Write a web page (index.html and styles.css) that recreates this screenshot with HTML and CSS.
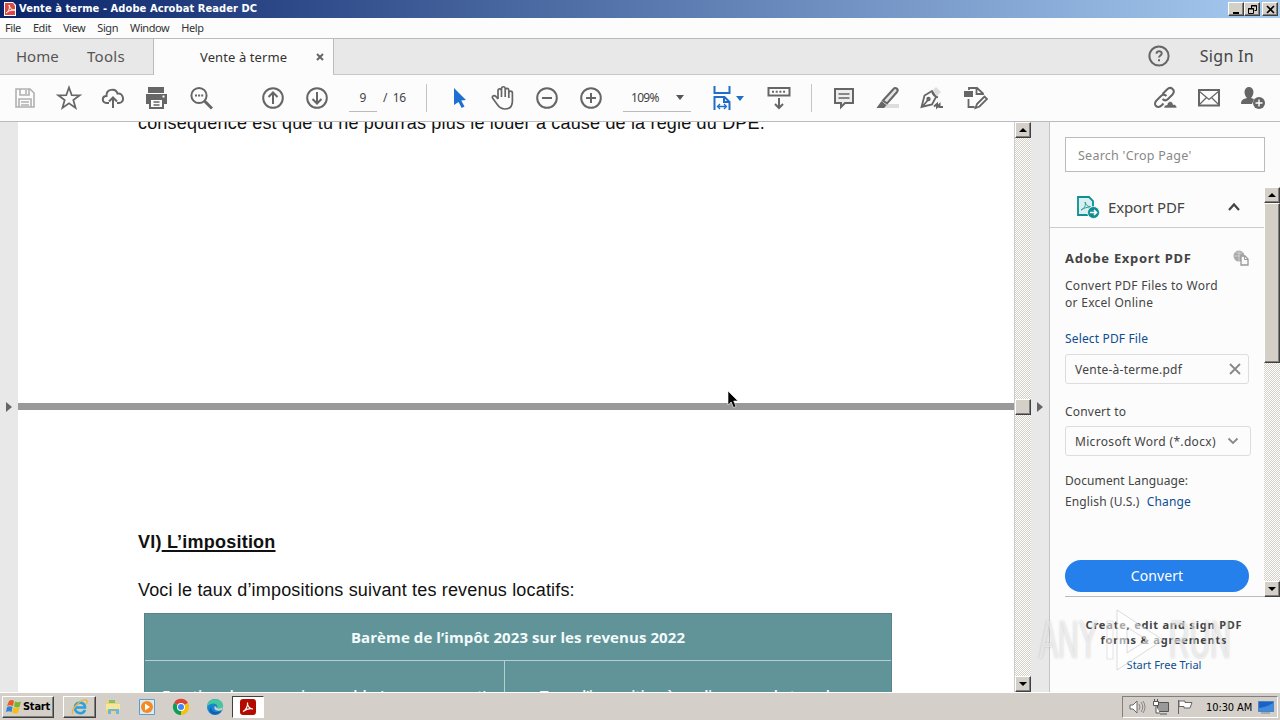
FILE: index.html
```html
<!DOCTYPE html>
<html lang="en">
<head>
    <meta charset="UTF-8">
    <title>Vente à terme - Adobe Acrobat Reader DC</title>
    <link rel="stylesheet" href="styles.css">
</head>
<body>
    <div class="titlebar">
        <svg class="app-icon" width="12" height="14" viewBox="0 0 12 14"><path d="M0 0h9l3 3v11H0z" fill="#fff"/><path d="M1 1h8l2 3v9H1z" fill="#dc4a43"/><path d="M2 11C5 9 6 6 5 3c2 5 3 5 6 5C7 8 4 9 2 11z" fill="none" stroke="#fff"/></svg>
        <span class="title">Vente à terme - Adobe Acrobat Reader DC</span>
        <div class="window-buttons">
            <div class="btn3d"><svg width="13" height="11"><path d="M3 8h6v2H3z"/></svg></div>
            <div class="btn3d"><svg width="13" height="11"><path d="M5.500 4V1.500h5v5H8.500M5 2h6M2.500 4.500h5v5h-5zM2 5h6" fill="none" stroke="#000"/></svg></div>
            <div class="btn3d close"><svg width="13" height="11"><path d="M3 2l7 7M10 2L3 9" stroke="#000" stroke-width="1.700"/></svg></div>
        </div>
    </div>

    <div class="menubar">
        <span>File</span><span>Edit</span><span>View</span><span>Sign</span><span>Window</span><span>Help</span>
    </div>

    <div class="tabs">
        <div class="tab-left"><span class="tab-home">Home</span><span class="tab-tools">Tools</span></div>
        <div class="tab-active"><span>Vente à terme</span><svg width="8" height="8"><path d="M1 1l6 6M7 1L1 7" stroke="#666" stroke-width="2"/></svg></div>
        <div class="tab-right">
            <svg class="icon" width="22" height="22" viewBox="0 0 22 22"><circle cx="11" cy="11" r="9.600"/><path d="M8.500 8.800c0-3.700 5.300-3.200 5.200-.3 0 1.900-2.700 2-2.700 4M11 14.200v2"/></svg>
            <span>Sign In</span>
        </div>
    </div>

    <div class="toolbar">
        <div class="tool"><svg class="icon light" width="22" height="22" viewBox="0 0 22 22"><path d="M2 2h14l4 4v14H2zM6 2v6h9V2M12 3v4M5 20v-8h12v8M7 15h8M7 18h8"/></svg></div>
        <div class="tool"><svg class="icon star" width="26" height="26" viewBox="0 0 26 26"><path d="M13 2.500l2.700 7.600 8 .2-6.400 4.800 2.300 7.800-6.600-4.600-6.600 4.600 2.300-7.800-6.400-4.800 8-.2z"/></svg></div>
        <div class="tool"><svg class="icon" width="24" height="24" viewBox="0 0 24 24"><path d="M8 17H5.500C.5 17 .7 10 5.500 10 5 3 14.500 1.500 16.500 7.500c6-1 8 9 1.500 9.500h-2M12 22v-10M8 15.500l4-4 4 4"/></svg></div>
        <div class="tool"><svg class="icon" width="24" height="24" viewBox="0 0 24 24"><path d="M4 2h14v4H4z" fill="#666"/><path d="M1 8h21v10h-3v-4H4v4H1z" fill="#666" stroke="none"/><path d="M5 13h13v9H5z" fill="#fcfcfc"/><path d="M8.500 16h6M8.500 19h6" stroke-width="1.400"/><path d="M17.500 10.500h2" stroke="#fff"/><path d="M4 7.500h14" stroke="#fff" stroke-width="1"/></svg></div>
        <div class="tool"><svg class="icon" width="24" height="24" viewBox="0 0 24 24"><circle cx="10" cy="9.500" r="7.600"/><path d="M15.500 15l7.500 7.500" stroke-width="3"/><path d="M6 9.500h2M9.100 9.500h2M12.200 9.500h2"/></svg></div>
        <div class="tool gap-before"><svg class="icon" width="24" height="24" viewBox="0 0 24 24"><circle cx="12" cy="12" r="9.800"/><path d="M12 18V6.500M7.500 11L12 6.500l4.500 4.500"/></svg></div>
        <div class="tool"><svg class="icon" width="24" height="24" viewBox="0 0 24 24"><circle cx="12" cy="12" r="9.800"/><path d="M12 6v11.500M7.500 13l4.500 4.500 4.500-4.500"/></svg></div>
        <div class="page-box"><span class="page-input">9</span><span class="page-total">/&nbsp; 16</span></div>
        <div class="sep"></div>
        <div class="tool"><svg class="arrow" width="14" height="22" viewBox="0 0 14 22"><path d="M1 1l12 12-4.800.5 3.300 6-2.800 1.500-3.200-6L1 18z" fill="#1f6fd0"/></svg></div>
        <div class="tool"><svg class="icon hand" width="26" height="26" viewBox="0 0 26 26"><path d="M8 14V6c0-2.800 3.500-2.800 3.500 0v6-8c0-3 3.700-3 3.700 0v8-6.500c0-2.800 3.600-2.800 3.600 0V13 8c0-2.600 3.600-2.600 3.600 0v8c0 5.500-3 8-7.500 8-4 0-6-2-8-5l-4-5.500c-1.700-2.200 1-3.800 3-2L8 14"/></svg></div>
        <div class="tool"><svg class="icon" width="24" height="24" viewBox="0 0 24 24"><circle cx="12" cy="12" r="9.800"/><path d="M7 12h10"/></svg></div>
        <div class="tool"><svg class="icon" width="24" height="24" viewBox="0 0 24 24"><circle cx="12" cy="12" r="9.800"/><path d="M7 12h10M12 7v10"/></svg></div>
        <div class="zoom-box"><span>109%</span><i class="caret"></i></div>
        <div class="tool fit"><svg class="icon blue" width="18" height="26" viewBox="0 0 18 26"><path d="M1.500 1v7h15V1M1.500 25V12h10l5 5v8M11 12v5h5M1.500 24h1M15.500 24h1"/><path d="M5 21.500h8M7 19l-2.500 2.500L7 24M11 19l2.500 2.500L11 24" stroke-width="1.300"/></svg><i class="caret blue"></i></div>
        <div class="tool"><svg class="icon" width="24" height="24" viewBox="0 0 24 24"><path d="M1.500 2h21v7.500h-21zM12 12v10M8 18l4 4 4-4"/><path d="M5 5.800h2M8.700 5.800h2M12.400 5.800h2M16.100 5.800h2"/></svg></div>
        <div class="sep right"></div>
        <div class="tool"><svg class="icon" width="22" height="24" viewBox="0 0 22 24"><path d="M2 3h18v14h-8l-4 4v-4H2z" fill="#eee"/><path d="M5.500 8h11M5.500 12h11" stroke-width="1.400"/></svg></div>
        <div class="tool"><svg class="icon" width="24" height="24" viewBox="0 0 24 24"><path d="M9 18h14v4H4z" fill="#ddd" stroke="none"/><path d="M7 14.500L17.500 3c2-2.500 5.500.5 3.500 3L11 17.500z" fill="#e4e4e4"/><path d="M5.500 15l5 4.200L8 22H.5z" fill="#666" stroke="none"/></svg></div>
        <div class="tool"><svg class="icon" width="24" height="24" viewBox="0 0 24 24"><path d="M13 4l3-3 5 5-4 4z" fill="#ddd" stroke="none"/><path d="M12 5L4.500 9.500 1.500 21l10.500-2.500L16 11zM2 21l6-7M12 5c.5 3 3 5.500 6 6.500" stroke-width="1.800"/><circle cx="8.500" cy="13" r="1.200"/><path d="M14 20.500l3-2.500v3l2.500-2.500v2.500H23"/></svg></div>
        <div class="tool"><svg class="icon" width="24" height="24" viewBox="0 0 24 24"><path d="M0 5h9v6H0z" fill="#666" stroke="none"/><path d="M5 4V2h8l6 5.500V9M12.500 2v6h6M4.500 13v8h6M13 18l7.500-7.500L23 13l-7.500 7.500-4 1.500z" stroke-width="1.800"/></svg></div>
        <div class="share-tools">
            <div class="tool"><svg class="icon" width="24" height="24" viewBox="0 0 24 24"><path d="M9.500 8l4.500-4.500c4-4 9 1 5.500 5L15 13c-2 2-4 1.500-5.500 0M13.500 10c-2-2-4-1.500-5.500 0l-4.500 4.500c-4 4 1 9 5 5l2-2"/><path d="M11 22c0-3 2-3 3-3 1-5 6-4 6-.5 3-.5 3 1 4 3.500z" fill="#666" stroke="#fcfcfc" stroke-width=".6"/></svg></div>
            <div class="tool"><svg class="icon" width="24" height="20" viewBox="0 0 24 20"><path d="M2 2h20v15.500H2z"/><path d="M2 3l10 8.500L22 3M2 17l7.500-7.500M22 17l-7.500-7.500" stroke-width="1.200"/></svg></div>
            <div class="tool"><svg class="icon" width="26" height="24" viewBox="0 0 26 24"><path d="M1 18c0-4 2-5 6-6-4-4-3-11 2-11s6 7 2 11l3 1-2 5z" fill="#666" stroke="none"/><circle cx="19" cy="17" r="6" fill="#666" stroke="none"/><path d="M15.500 17h7M19 13.500v7" stroke="#fff" stroke-width="1.400"/></svg></div>
        </div>
    </div>

    <div class="main">
        <div class="rail"><i class="rail-arrow"></i></div>
        <div class="document">
            <p class="cut-line">conséquence est que tu ne pourras plus le louer à cause de la règle du DPE.</p>
            <div class="page-gap"></div>
            <h1>VI)<u> L’imposition</u></h1>
            <p class="intro">Voci le taux d’impositions suivant tes revenus locatifs:</p>
            <div class="tax-table">
                <div class="tax-title">Barème de l’impôt 2023 sur les revenus 2022</div>
                <div class="tax-head"><div>Fraction du revenu imposable (pour une part)</div><div>Taux d’imposition à appliquer sur la tranche</div></div>
            </div>
        </div>
        <div class="scrollbar doc-scroll">
            <div class="btn3d"><i class="up"></i></div>
            <div class="btn3d thumb"></div>
            <div class="btn3d"><i class="down"></i></div>
        </div>
        <div class="rail"><i class="rail-arrow"></i></div>
        <div class="panel">
            <div class="search">Search 'Crop Page'</div>
            <div class="panel-body">
                <div class="panel-content">
                    <div class="export-head">
                        <svg width="24" height="24" viewBox="0 0 24 24"><path d="M2 2h11l4 4v14H2z" fill="#d8f0f0" stroke="#108e91" stroke-width="1.800"/><path d="M5 15c4-2 5-5 4-8 1 3 3 5 6 5-4 0-7 1-10 3z" fill="none" stroke="#2d9b9d"/><circle cx="17.500" cy="17.500" r="6" fill="#108e91" stroke="#fcfcfc" stroke-width=".8"/><path d="M14 17.500h6M18 15l2.500 2.500L18 20" fill="none" stroke="#fff" stroke-width="1.600"/></svg>
                        <span>Export PDF</span>
                        <svg class="chevron" width="14" height="10" viewBox="0 0 14 10"><path d="M2 8l5-5.500L12 8" fill="none" stroke="#444" stroke-width="2.200"/></svg>
                    </div>
                    <div class="export-form">
                        <div class="form-title"><span>Adobe Export PDF</span><svg width="18" height="18" viewBox="0 0 18 18"><circle cx="7" cy="7" r="5.500" fill="#aaa"/><path d="M1.500 7h11M7 1.500v11M3.500 3.500q3.500 2 7 0" fill="none" stroke="#ddd" stroke-width=".7"/><path d="M9 7h4l3 3v6H9z" fill="#fafafa" stroke="#999" stroke-width="1.300"/><path d="M12.500 7v3.500H16" fill="none" stroke="#999"/></svg></div>
                        <p class="desc">Convert PDF Files to Word<br>or Excel Online</p>
                        <p class="link select-file">Select PDF File</p>
                        <div class="field file-field"><span>Vente-à-terme.pdf</span><svg width="12" height="12"><path d="M1 1l10 10M11 1L1 11" stroke="#888" stroke-width="1.800"/></svg></div>
                        <p class="convert-to">Convert to</p>
                        <div class="field format-field"><span>Microsoft Word (*.docx)</span><svg width="12" height="8"><path d="M1.500 1.500L6 6l4.500-4.500" fill="none" stroke="#888" stroke-width="1.800"/></svg></div>
                        <p class="doc-lang">Document Language:</p>
                        <p class="lang">English (U.S.) <span class="link">Change</span></p>
                        <div class="convert-btn">Convert</div>
                    </div>
                </div>
                <div class="scrollbar panel-scroll">
                    <div class="btn3d"><i class="up"></i></div>
                    <div class="btn3d thumb"></div>
                    <div class="btn3d end"><i class="down"></i></div>
                </div>
            </div>
            <div class="promo">
                <b>Create, edit and sign PDF<br>forms &amp; agreements</b>
                <span class="link">Start Free Trial</span>
            </div>
        </div>
    </div>

    <div class="taskbar">
        <div class="start btn3d"><svg width="16" height="16" viewBox="0 0 16 16"><path d="M3 2q3-2 5 0L7 7Q4 5.500 1 7z" fill="#ea5b22"/><path d="M9 2.500q3 1.500 6 0L13.500 8Q11 9 8 7.500z" fill="#76b82a"/><path d="M1 8q3-1.500 5.500 0L5.500 13Q3 11.500 0 13z" fill="#2f82d6"/><path d="M7.500 8.500q3 1.500 6 0L12 14q-3 1-6-.5z" fill="#f9bd19"/></svg><span>Start</span></div>
        <div class="task btn3d ie"><svg width="18" height="18" viewBox="0 0 18 18"><path d="M14 12c-2 5-10 4-10-2.500S14 3 14 9.500H5" fill="none" stroke="#2da0dc" stroke-width="2.600"/><path d="M2 16C-1 13 9 1 15 2c2 .5 1 3 0 4" fill="none" stroke="#e6b83a" stroke-width="1.400"/></svg></div>
        <div class="task"><svg width="18" height="18" viewBox="0 0 18 18"><path d="M2 3h5l1 2h7v10H2z" fill="#f2d36b"/><path d="M5 2h6v3H5z" fill="#7cc474"/><path d="M2 6h14v6H2z" fill="#f8e59a"/><path d="M4 16v-5h11v5h-3v-3H7v3z" fill="#6bb7e0"/></svg></div>
        <div class="task"><svg width="18" height="18" viewBox="0 0 18 18"><path d="M1.500 1.500h15v15h-15z" fill="#d9ebf7" stroke="#5b9dcb"/><circle cx="9" cy="9" r="6" fill="#f58a1f"/><path d="M7 5.500l5 3.500-5 3.500z" fill="#fff"/></svg></div>
        <div class="task"><svg width="18" height="18" viewBox="0 0 18 18"><path d="M9 9L2 5a8 8 0 0 1 14 0z" fill="#db4437"/><path d="M9 9L2 5a8 8 0 0 0 7 12z" fill="#0f9d58"/><path d="M9 9l7-4a8 8 0 0 1-7 12z" fill="#f4c20d"/><circle cx="9" cy="9" r="4" fill="#fff"/><circle cx="9" cy="9" r="3" fill="#4285f4"/></svg></div>
        <div class="task"><svg width="18" height="18" viewBox="0 0 18 18"><circle cx="9" cy="9" r="8" fill="#1686d0"/><path d="M1 9C1-1 17-1 17 8c0 4-5 4-6 2 2-4-5-7-10-1z" fill="#45c8a0"/><path d="M5 9c0 5 5 6 10 4-2 4-8 5-11 1-1-2 0-4 1-5z" fill="#1261ad"/><path d="M9 8c-2 3 1 6 7 4l1-3c-2 2-5 2-6 1z" fill="#d4d0c8"/></svg></div>
        <div class="task pressed"><svg width="16" height="16" viewBox="0 0 16 16"><rect width="16" height="16" rx="3" fill="#b30b00"/><path d="M3 12.500C6 11 8 7 7.500 3.500 7 7 10 10 13 10c-4-1-8 1-10 2.500z" fill="none" stroke="#fff" stroke-width="1.200"/></svg></div>
        <div class="tray">
            <svg width="18" height="18" viewBox="0 0 18 18"><path d="M2 7h3l4-4v12l-4-4H2z" fill="#fff" stroke="#666"/><path d="M11 6q2 3 0 6M13 4q3.500 5 0 10M15 3q4 6 0 12" fill="none" stroke="#888"/></svg>
            <svg width="18" height="18" viewBox="0 0 18 18"><path d="M5.500 4.500h11v9h-11zM8 16h7" fill="#999" stroke="#555"/><path d="M1.500 3.500h5v4h-5zM2.500 1v2M5.500 1v2M4 8v7h4" fill="#fff" stroke="#555"/></svg>
            <svg width="18" height="18" viewBox="0 0 18 18"><path d="M2.500 2v14M3 3h6v1.500h7L14 10H8V8.500H3z" fill="#fff" stroke="#666"/></svg>
            <span>10:30 AM</span>
            <svg width="16" height="14" viewBox="0 0 16 14"><path d="M.5 1.500h15v10H.5z" fill="#1c62c4" stroke="#4f83bd"/><path d="M1 8q6 0 14-5v8H1z" fill="#3f8be0"/><path d="M3 13h9" stroke="#789"/></svg>
        </div>
    </div>

    <svg class="mouse" width="12" height="19" viewBox="0 0 12 19"><path d="M1 1v14l3.200-3 2.300 5.500 2.500-1L6.700 11H11z" fill="#000" stroke="#fff" stroke-width=".6"/></svg>

    <div class="watermark"><span class="any">ANY</span><svg width="64" height="66" viewBox="0 0 64 66"><path d="M12 3l46 30-46 30zM22 20v26l20-13z" fill="#fff" fill-opacity=".55" fill-rule="evenodd" stroke="#bbb" stroke-opacity=".5"/><path d="M2 14h6v38H2z" fill="#fff" fill-opacity=".5" stroke="#ccc" stroke-opacity=".5"/></svg><span class="run">RUN</span></div>
</body>
</html>
```
FILE: styles.css
```css
* {
    box-sizing: border-box;
}
body {
    margin: 0;
    width: 1280px;
    height: 720px;
    overflow: hidden;
    position: relative;
    display: flex;
    flex-direction: column;
    background: #fff;
    color: #444;
    font-family: "Noto Sans", sans-serif;
}
p, h1 {
    margin: 0;
    white-space: nowrap;
}
svg {
    display: block;
    flex: none;
}
span {
    white-space: nowrap;
}
.icon {
    fill: none;
    stroke: #666;
    stroke-width: 2;
}
.icon.light {
    stroke: #b0b0b0;
    stroke-width: 1.6;
}
.icon.hand, .icon.star {
    stroke-width: 1.7;
}
.icon.blue {
    stroke: #1f6fc8;
}
.btn3d {
    display: flex;
    align-items: center;
    justify-content: center;
    background: #d4d0c8;
    border: 1px solid;
    border-color: #fff #404040 #404040 #fff;
    box-shadow: inset -1px -1px 0 #808080;
}

/* title bar and menu */
.titlebar {
    height: 18px;
    flex: none;
    display: flex;
    align-items: center;
    padding: 0 2px 0 4px;
    background: linear-gradient(to right, #0a246a, #a6caf0);
}
.title {
    margin-left: 3px;
    color: #fff;
    font: bold 11px/16px "DejaVu Sans Condensed", "DejaVu Sans", sans-serif;
    letter-spacing: 0.09px;
}
.window-buttons {
    margin-left: auto;
    display: flex;
}
.window-buttons .btn3d {
    width: 16px;
    height: 14px;
}
.window-buttons .close {
    margin-left: 2px;
}
.menubar {
    height: 20px;
    flex: none;
    display: flex;
    gap: 12px;
    padding-left: 5px;
    background: #fcfcfc;
    color: #333;
    font-size: 11px;
    line-height: 20px;
    letter-spacing: -0.42px;
}

/* tabs */
.tabs {
    height: 37px;
    flex: none;
    display: flex;
    border-top: 1px solid #bbb;
    background: #e8e8e8;
}
.tab-left {
    width: 154px;
    display: flex;
    border-right: 1px solid #bbb;
    border-bottom: 1px solid #c8c8c8;
    font-size: 15px;
    line-height: 35px;
    color: #555;
}
.tab-home {
    margin-left: 16px;
    width: 71px;
}
.tab-tools {
    letter-spacing: 0.3px;
}
.tab-active {
    width: 179px;
    display: flex;
    align-items: center;
    justify-content: space-between;
    padding: 0 9px 0 46px;
    background: #fcfcfc;
    color: #333;
    font-size: 13px;
    letter-spacing: 0.1px;
}
.tab-right {
    flex: 1;
    display: flex;
    align-items: center;
    justify-content: flex-end;
    padding-right: 26px;
    border-left: 1px solid #bbb;
    border-bottom: 1px solid #c8c8c8;
    font-size: 16px;
    line-height: 34px;
}
.tab-right svg {
    margin-bottom: 2px;
}
.tab-right span {
    margin: 0 0 2px 30px;
    letter-spacing: 0.3px;
}

/* toolbar */
.toolbar {
    height: 47px;
    flex: none;
    display: flex;
    align-items: center;
    padding: 0 5px 0 3px;
    background: #fcfcfc;
    border-bottom: 1px solid #bbb;
    font-size: 12px;
}
.tool {
    width: 44px;
    height: 40px;
    flex: none;
    display: flex;
    align-items: center;
    justify-content: center;
}
.gap-before {
    margin-left: 28px;
}
.page-box {
    width: 87px;
    display: flex;
    padding-left: 10px;
}
.page-input {
    width: 28px;
    height: 28px;
    text-align: center;
    line-height: 27px;
    border-bottom: 1px solid #bbb;
}
.page-total {
    margin-left: 6px;
    line-height: 27px;
    letter-spacing: -0.3px;
}
.sep {
    width: 1px;
    height: 28px;
    margin-right: 10px;
    background: #c4c4c4;
}
.sep.right {
    margin-left: 10px;
}
.arrow {
    margin-left: 1px;
}
.zoom-box {
    width: 68px;
    height: 28px;
    margin: 0 15px 0 10px;
    padding: 0 7px 0 8px;
    display: flex;
    align-items: center;
    justify-content: space-between;
    border-bottom: 1px solid #bbb;
    letter-spacing: -0.7px;
}
.caret {
    border: 4px solid transparent;
    border-top: 5px solid #555;
    border-bottom: 0;
}
.caret.blue {
    border-top-color: #1f6fc8;
}
.fit {
    gap: 5px;
    margin-right: 7px;
}
.share-tools {
    display: flex;
    margin-left: auto;
}

/* document area */
.main {
    height: 570px;
    flex: none;
    display: flex;
}
.rail {
    width: 18px;
    flex: none;
    display: flex;
    align-items: center;
    justify-content: center;
    background: #e8e8e8;
}
.rail-arrow {
    border: 5px solid transparent;
    border-left: 6px solid #666;
    border-right: 0;
}
.document {
    width: 996px;
    flex: none;
    overflow: hidden;
    color: #111;
    font-family: "Liberation Sans", Arial, sans-serif;
    font-size: 18px;
}
.cut-line {
    height: 20px;
    margin: -9px 0 0 120px;
    line-height: 20px;
    letter-spacing: 0.18px;
}
.page-gap {
    height: 7px;
    margin-top: 270px;
    background: #999;
}
.document h1 {
    margin: 120px 0 0 120px;
    font-size: 18px;
    line-height: 24px;
    letter-spacing: 0.22px;
}
.document h1 u {
    text-underline-offset: 2px;
    text-decoration-thickness: 2px;
    text-decoration-skip-ink: none;
}
.intro {
    margin: 24px 0 0 120px;
    line-height: 24px;
    letter-spacing: 0.17px;
}
.tax-table {
    width: 748px;
    margin: 11px 0 0 126px;
    background: #609499;
    border: 1px solid #568489;
    color: #f4fbfb;
}
.tax-title {
    height: 47px;
    text-align: center;
    font: bold 15px/47px "Open Sans", sans-serif;
    letter-spacing: 0.09px;
    border-bottom: 1px solid #b5d0d2;
}
.tax-head {
    display: flex;
    font: 600 15px/24px "Open Sans", sans-serif;
    white-space: nowrap;
}
.tax-head div {
    flex: 1;
    height: 60px;
    padding: 22px 0 0 35px;
    letter-spacing: -0.35px;
}
.tax-head div:first-child {
    flex: none;
    width: 360px;
    padding-left: 17px;
    letter-spacing: -0.1px;
    border-right: 1px solid #b5d0d2;
}

/* scrollbars */
.scrollbar {
    flex: none;
    display: flex;
    flex-direction: column;
    background: repeating-conic-gradient(#fff 0 25%, #d4d0c8 0 50%) 0 0 / 2px 2px;
}
.scrollbar .btn3d {
    height: 16px;
    flex: none;
}
.doc-scroll {
    width: 17px;
    border-left: 1px solid #ccc;
}
.doc-scroll .thumb {
    margin: 261px 0;
}
.up {
    border: 4px solid transparent;
    border-bottom-color: #000;
    border-top: 0;
}
.down {
    border: 4px solid transparent;
    border-top-color: #000;
    border-bottom: 0;
}

/* tools panel */
.panel {
    width: 231px;
    flex: none;
    border-left: 1px solid #c4c4c4;
    background: #fcfcfc;
}
.search {
    width: 200px;
    height: 35px;
    margin: 15px 0 15px 15px;
    padding-left: 12px;
    border: 1px solid #bbb;
    background: #fff;
    color: #888;
    font-size: 12.5px;
    line-height: 35px;
    letter-spacing: 0.25px;
}
.panel-body {
    height: 410px;
    display: flex;
}
.panel-content {
    width: 214px;
}
.panel-scroll {
    width: 16px;
}
.panel-scroll .thumb {
    height: 160px;
}
.panel-scroll .end {
    margin-top: auto;
}
.export-head {
    height: 41px;
    display: flex;
    align-items: center;
    padding-left: 26px;
    border-bottom: 1px solid #ccc;
    font-size: 15px;
    letter-spacing: -0.15px;
}
.export-head span {
    margin-left: 8px;
    width: 119px;
}
.export-form {
    height: 369px;
    margin-left: 15px;
    padding-top: 20px;
    border-bottom: 1px solid #bbb;
    font-size: 12px;
    line-height: 17px;
}
.form-title {
    display: flex;
    align-items: center;
    justify-content: space-between;
    width: 185px;
    height: 20px;
    font-size: 13px;
    font-weight: bold;
    letter-spacing: 0.7px;
}
.desc {
    margin-top: 9px;
    letter-spacing: 0.28px;
}
.link {
    color: #0d4e91;
}
.select-file {
    margin-top: 19px;
    letter-spacing: 0.15px;
}
.field {
    display: flex;
    align-items: center;
    justify-content: space-between;
    width: 184px;
    height: 30px;
    padding: 0 7px 0 9px;
    border: 1px solid #ddd;
    border-radius: 3px;
    letter-spacing: 0.25px;
}
.file-field {
    margin-top: 7px;
}
.convert-to {
    margin-top: 19px;
    letter-spacing: 0.2px;
}
.format-field {
    width: 186px;
    margin-top: 6px;
    padding-right: 11px;
    letter-spacing: 0.32px;
}
.doc-lang {
    margin-top: 16px;
    letter-spacing: 0.1px;
}
.lang {
    margin-top: 4px;
    letter-spacing: 0.13px;
}
.lang .link {
    margin-left: 4px;
}
.convert-btn {
    width: 184px;
    height: 32px;
    margin-top: 50px;
    border-radius: 16px;
    background: #2680eb;
    color: #fff;
    font-size: 14px;
    line-height: 31px;
    letter-spacing: 0.1px;
    text-align: center;
}
.promo {
    display: flex;
    flex-direction: column;
    align-items: center;
    padding: 20px 2px 0 0;
    text-align: center;
    font-size: 11px;
    line-height: 15px;
}
.promo b {
    letter-spacing: 0.8px;
}
.promo .link {
    margin-top: 10px;
}

/* taskbar */
.taskbar {
    height: 28px;
    flex: none;
    display: flex;
    align-items: center;
    padding: 1px 2px 0;
    border-top: 1px solid #fff;
    background: #d4cfc8;
}
.start {
    width: 52px;
    height: 22px;
    gap: 1px;
    margin-right: 9px;
    color: #000;
    font: bold 11px/20px "DejaVu Sans Condensed", sans-serif;
    letter-spacing: -0.2px;
}
.task {
    width: 34px;
    height: 22px;
    display: flex;
    align-items: center;
    justify-content: center;
}
.task.ie {
    width: 33px;
}
.pressed {
    width: 32px;
    background: #fff;
    border: 1px solid;
    border-color: #404040 #fff #fff #404040;
}
.tray {
    display: flex;
    align-items: center;
    gap: 6px;
    width: 156px;
    height: 22px;
    margin-left: auto;
    padding-left: 5px;
    border: 1px solid;
    border-color: #808080 #fff #fff #808080;
    color: #000;
    font: 11px "DejaVu Sans Condensed", sans-serif;
    letter-spacing: -0.1px;
}
.tray span {
    margin-left: 6px;
}

.mouse {
    position: absolute;
    left: 727px;
    top: 390px;
}
.watermark {
    position: absolute;
    left: 1039px;
    top: 607px;
    display: flex;
    align-items: center;
    color: rgba(255, 255, 255, 0.55);
    font: 53px/66px "Liberation Sans", Arial, sans-serif;
    text-shadow: 0 0 3px rgba(110, 110, 110, 0.35);
}
.watermark span {
    width: 66px;
    transform: scaleX(0.54);
    transform-origin: left;
}
```
